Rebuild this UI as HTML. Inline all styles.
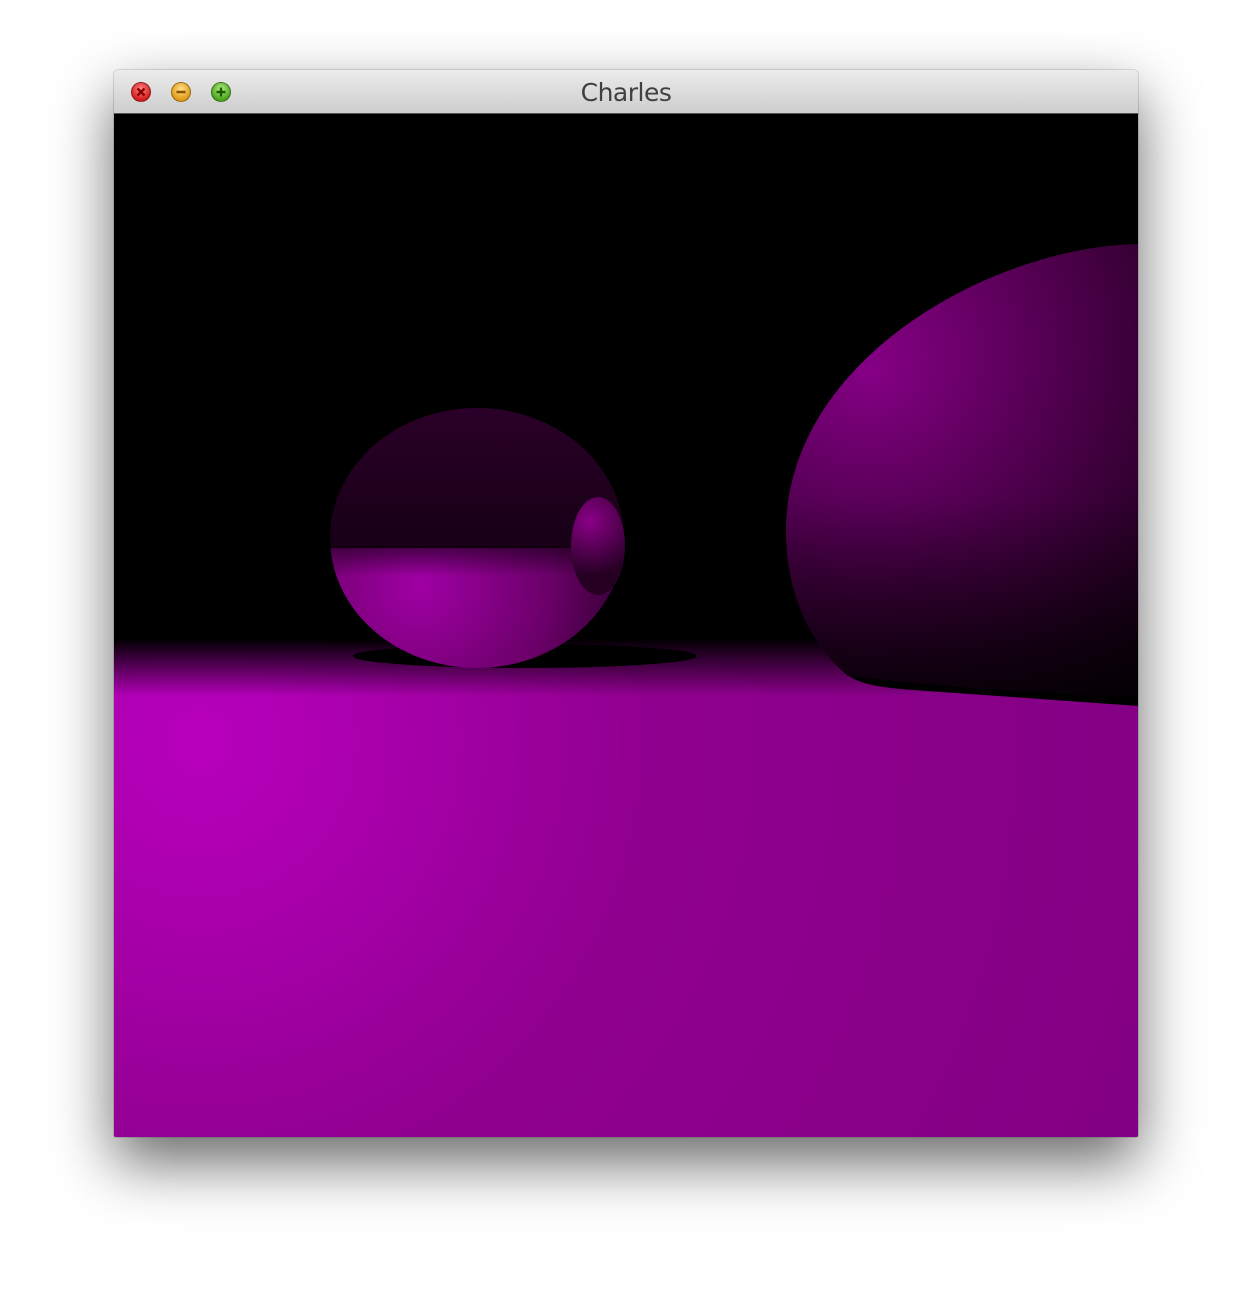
<!DOCTYPE html>
<html><head><style>
html,body{margin:0;padding:0;background:#fff;width:1252px;height:1296px;overflow:hidden}
.win{position:absolute;left:114px;top:70px;width:1024px;height:1067px;border-radius:5px 5px 2px 2px;box-shadow:0 25px 60px rgba(0,0,0,.6),0 0 0 1px rgba(0,0,0,.12);overflow:hidden}
.tb{height:43px;background:linear-gradient(#ececec,#d6d6d6 70%,#cfcfcf);border-bottom:1px solid #555;position:relative}
.tb .t{position:absolute;left:0;right:0;top:8px;text-align:center;font:25px "DejaVu Sans","Liberation Sans",sans-serif;color:#404040;letter-spacing:-0.5px}
.b{position:absolute;top:12px;width:20px;height:20px;border-radius:50%;box-sizing:border-box;border:1px solid rgba(0,0,0,.35)}
svg{display:block}
</style></head><body>
<div class="win">
<div class="tb">
<div class="b" style="left:17px;background:radial-gradient(circle at 50% 35%,#ff8a8a,#d31c1c 70%)"><svg width="18" height="18"><path d="M5.5 5.5L12.5 12.5M12.5 5.5L5.5 12.5" stroke="#8a0000" stroke-width="2.4"/></svg></div>
<div class="b" style="left:57px;background:radial-gradient(circle at 50% 35%,#ffe08a,#e09a18 70%)"><svg width="18" height="18"><path d="M4.5 9H13.5" stroke="#8a5200" stroke-width="2.4"/></svg></div>
<div class="b" style="left:97px;background:radial-gradient(circle at 50% 35%,#b8f08a,#4aa51c 70%)"><svg width="18" height="18"><path d="M4.5 9H13.5M9 4.5V13.5" stroke="#1e5a00" stroke-width="2.4"/></svg></div>
<div class="t">Charles</div>
</div>
<svg width="1024" height="1024" viewBox="114 113 1024 1024">
<defs>
<radialGradient id="fl" cx="200" cy="740" r="1000" gradientUnits="userSpaceOnUse">
<stop offset="0" stop-color="#b800bd"/><stop offset=".45" stop-color="#90008f"/><stop offset="1" stop-color="#820083"/></radialGradient>
<linearGradient id="fade" x1="0" y1="638" x2="0" y2="695" gradientUnits="userSpaceOnUse">
<stop offset="0" stop-color="#000" stop-opacity="1"/><stop offset="1" stop-color="#000" stop-opacity="0"/></linearGradient>
<linearGradient id="s1t" x1="0" y1="407" x2="0" y2="550" gradientUnits="userSpaceOnUse">
<stop offset="0" stop-color="#2a0028"/><stop offset="1" stop-color="#160014"/></linearGradient>
<radialGradient id="s1b" cx="420" cy="585" r="220" gradientUnits="userSpaceOnUse">
<stop offset="0" stop-color="#a000a4"/><stop offset=".6" stop-color="#6a0068"/><stop offset="1" stop-color="#2a0028"/></radialGradient>
<linearGradient id="s1f" x1="0" y1="546" x2="0" y2="575" gradientUnits="userSpaceOnUse">
<stop offset="0" stop-color="#000" stop-opacity=".5"/><stop offset="1" stop-color="#000" stop-opacity="0"/></linearGradient>
<radialGradient id="s2" cx="870" cy="370" r="420" gradientUnits="userSpaceOnUse">
<stop offset="0" stop-color="#8c008c"/><stop offset=".5" stop-color="#4e004c"/><stop offset="1" stop-color="#10000f"/></radialGradient>
<linearGradient id="s2v" x1="0" y1="243" x2="0" y2="705" gradientUnits="userSpaceOnUse">
<stop offset="0" stop-color="#000" stop-opacity="0"/><stop offset=".55" stop-color="#000" stop-opacity=".1"/><stop offset="1" stop-color="#000" stop-opacity=".8"/></linearGradient>
<radialGradient id="sm" cx="590" cy="520" r="55" gradientUnits="userSpaceOnUse">
<stop offset="0" stop-color="#8a0088"/><stop offset="1" stop-color="#250022"/></radialGradient>
<clipPath id="c1"><ellipse cx="477" cy="537" rx="147" ry="130"/></clipPath>
</defs>
<rect x="114" y="113" width="1024" height="1024" fill="#000"/>
<rect x="114" y="635" width="1024" height="502" fill="url(#fl)"/>
<rect x="114" y="635" width="1024" height="62" fill="url(#fade)"/>
<ellipse cx="525" cy="655" rx="172" ry="12" fill="#000"/>
<g clip-path="url(#c1)">
<rect x="330" y="407" width="300" height="145" fill="url(#s1t)"/>
<rect x="330" y="547" width="300" height="125" fill="url(#s1b)"/>
<rect x="330" y="546" width="300" height="30" fill="url(#s1f)"/>
</g>
<ellipse cx="598" cy="545" rx="27" ry="49" fill="url(#sm)"/>
<path d="M846,670 Q850,683 900,688 L1138,705 L1138,690 Z" fill="#000"/>
<path d="M1138,243 C990,246 786,360 786,530 C786,595 812,645 848,675 Q980,690 1138,696 Z" fill="url(#s2)"/>
<path d="M1138,243 C990,246 786,360 786,530 C786,595 812,645 848,675 Q980,690 1138,696 Z" fill="url(#s2v)"/>
</svg>
</div>
</body></html>
